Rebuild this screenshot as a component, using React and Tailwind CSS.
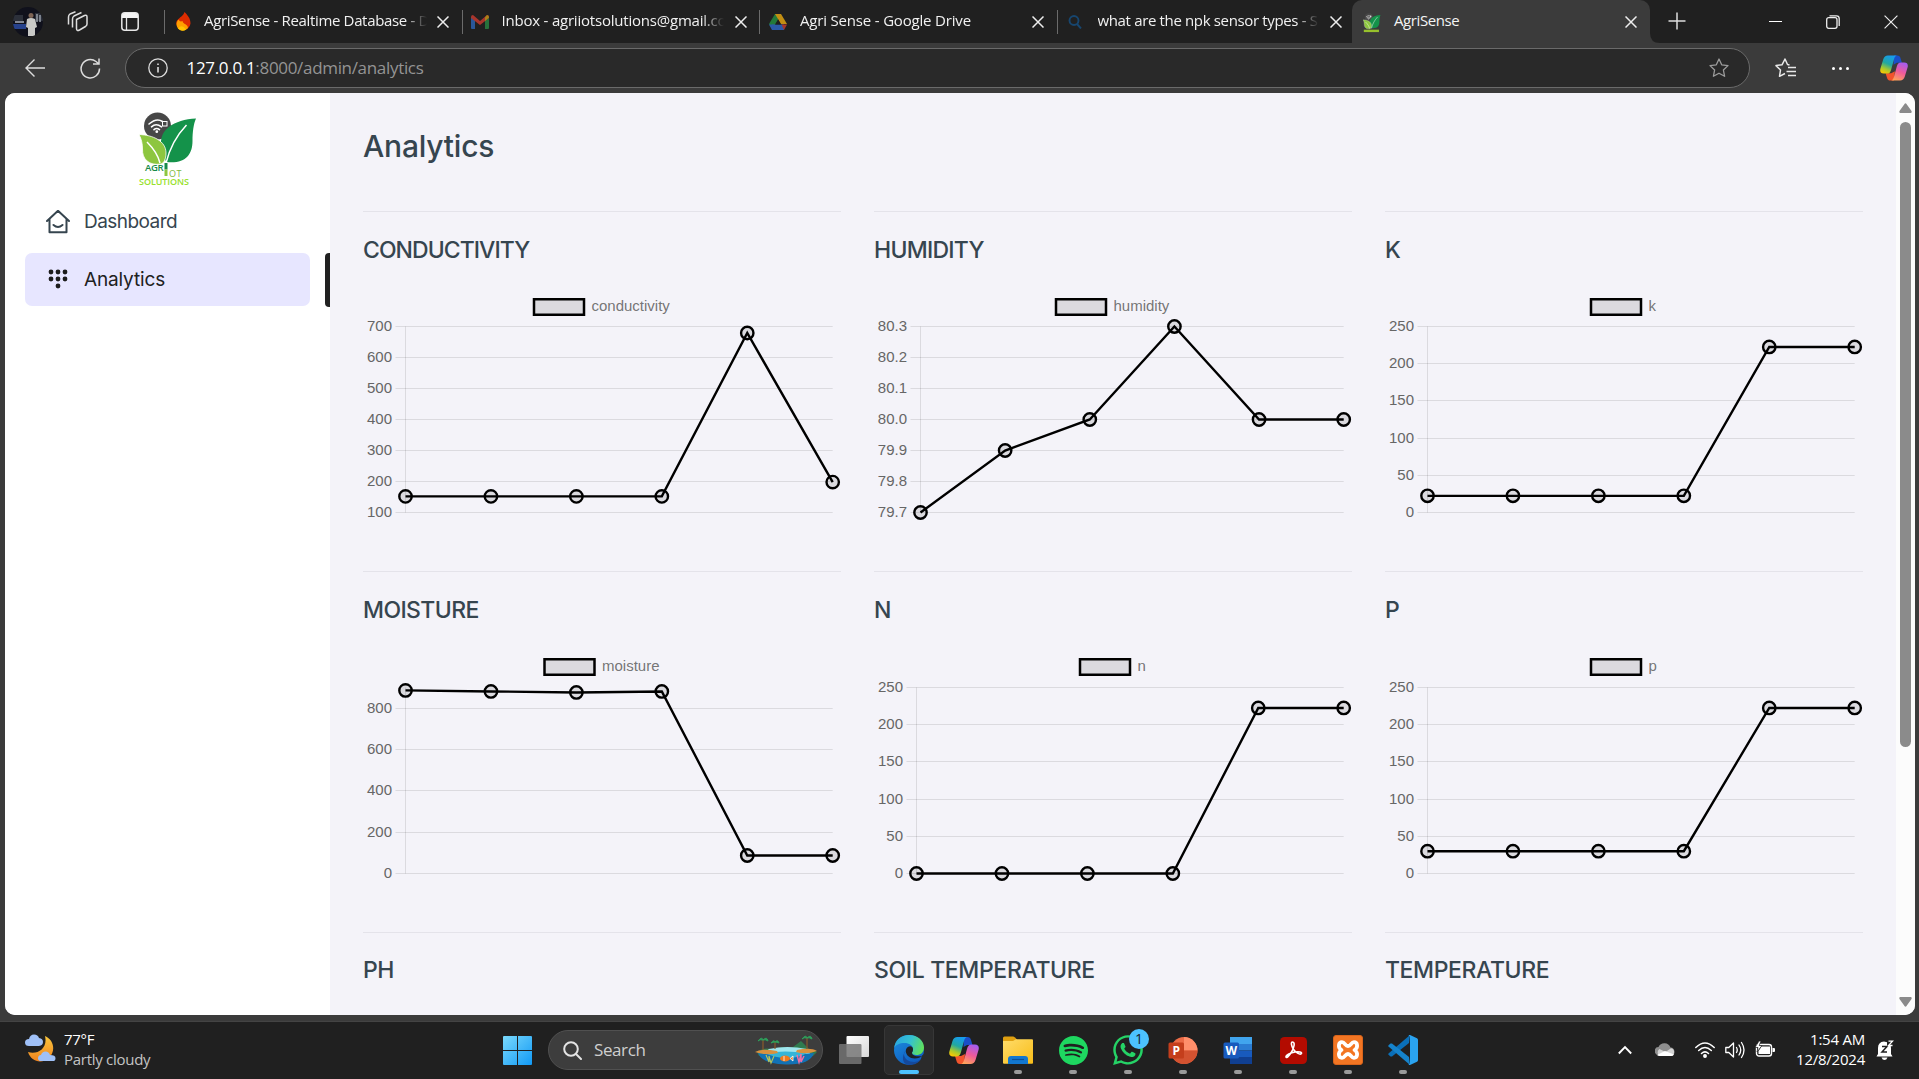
import { SiSpotify } from "react-icons/si";
import { FaWhatsapp } from "react-icons/fa";

const CHARTS = [
  { title: "CONDUCTIVITY", track: "tracking-[-0.95px]", lift: true, label: "conductivity", legendX: 171, left: 42.5, min: 100, max: 700, ticks: [700, 600, 500, 400, 300, 200, 100], data: [152, 152, 152, 152, 679, 198] },
  { title: "HUMIDITY", track: "tracking-[-0.75px]", lift: true, label: "humidity", legendX: 182, left: 46.5, min: 79.7, max: 80.3, digits: 1, ticks: [80.3, 80.2, 80.1, 80.0, 79.9, 79.8, 79.7], data: [79.7, 79.9, 80, 80.3, 80, 80] },
  { title: "K", track: "tracking-normal", lift: true, label: "k", legendX: 206, left: 42.5, min: 0, max: 250, ticks: [250, 200, 150, 100, 50, 0], data: [22.4, 22.4, 22.4, 22.4, 222.5, 222.5] },
  { title: "MOISTURE", track: "tracking-[-0.6px]", label: "moisture", legendX: 181.5, left: 42.5, min: 0, max: 900, ticks: [800, 600, 400, 200, 0], data: [886, 881, 876, 881, 87, 87] },
  { title: "N", track: "tracking-normal", label: "n", legendX: 206, left: 42.5, min: 0, max: 250, ticks: [250, 200, 150, 100, 50, 0], data: [0, 0, 0, 0, 222.5, 222.5] },
  { title: "P", track: "tracking-normal", label: "p", legendX: 206, left: 42.5, min: 0, max: 250, ticks: [250, 200, 150, 100, 50, 0], data: [30, 30, 30, 30, 222.5, 222.5] },
  { title: "PH", track: "tracking-[-0.5px]" },
  { title: "SOIL TEMPERATURE", track: "tracking-[-0.35px]" },
  { title: "TEMPERATURE", track: "tracking-[-0.4px]" },
];

function LineChart({ chart }) {
  const { left, min, max, ticks, data, label, legendX, lift, digits = 0 } = chart;
  const top = lift ? 34.5 : 35.5;
  const bottom = lift ? 220.5 : 221.5;
  const right = 469.7;
  const yOf = (v) => bottom - ((v - min) / (max - min)) * (bottom - top);
  const xOf = (i) => left + (i * (right - left)) / (data.length - 1);
  const points = data.map((v, i) => [xOf(i), yOf(v)]);
  return (
    <svg className="block h-[240px] w-[478px] overflow-visible font-['Liberation_Sans',Arial,sans-serif] text-[15px]" viewBox="0 0 478 240">
      <rect x={legendX} y="7.25" width="50" height="15.5" fill="rgba(0,0,0,0.1)" stroke="#000" strokeWidth="2.5" />
      <text x={legendX + 57.5} y="19" fill="#666" fillOpacity="0.9">{label}</text>
      {ticks.map((t) => {
        const y = Math.round(yOf(t) - 0.5) + 0.5;
        return (
          <g key={t}>
            <line x1={left - 10} x2={right} y1={y} y2={y} stroke="rgba(0,0,0,0.1)" />
            <text x={left - 13.5} y={y + 4.5} textAnchor="end" fill="#666">{t.toFixed(digits)}</text>
          </g>
        );
      })}
      <line x1={left} x2={left} y1={top} y2={bottom} stroke="rgba(0,0,0,0.1)" />
      <polyline points={points.map((p) => p.join(",")).join(" ")} fill="none" stroke="#000" strokeWidth="2.4" />
      {points.map(([x, y]) => (
        <circle key={x} cx={x} cy={y} r="6.2" fill="rgba(0,0,0,0.1)" stroke="#000" strokeWidth="2.4" />
      ))}
    </svg>
  );
}

function ChartCard({ chart }) {
  return (
    <section className="h-[360.4px] border-t border-[#e4e3ea]">
      <h2 className={`mt-[21.5px] h-8 text-[23px] leading-8 font-[450] whitespace-nowrap text-[#36454f] ${chart.track}`}>{chart.title}</h2>
      <div className="mt-[26px]">{chart.data && <LineChart chart={chart} />}</div>
    </section>
  );
}

function Leaves({ className, children, viewBox = "0 0 58 74" }) {
  return (
    <svg className={className} viewBox={viewBox}>
      <circle cx="18.5" cy="14" r="13.5" fill="#474747" />
      <g fill="none" stroke="#fff" strokeWidth="1.6" strokeLinecap="round">
        <path d="M10 12q7.500-6.500 13.500-2.500M12.500 14.800q4.500-4 10 0M15 17.600q2.500-2.200 5.500 0" />
        <rect x="23.500" y="9.500" width="4.500" height="4.500" strokeWidth="1" />
      </g>
      <circle cx="17.800" cy="19.700" r="1.400" fill="#fff" />
      <path d="M57 6.500C35 7.500 19 18 22.500 35C24 43 25.500 47 27.500 50C46 52 53.500 43 53.500 29C53.500 20 54.500 12 57 6.500Z" fill="#14924a" />
      <path d="M0 22.500C14 23 27 29 27 41C27 47 25 51 22 52C10 54 3 47 3.500 37C3.500 32 2.500 27 0 22.500Z" fill="#8dc63f" stroke="#fff" strokeWidth=".8" />
      <path d="M47.500 13C38 23 31 35 27 51M8 30C15 37 19 43 21 51" fill="none" stroke="#fff" strokeWidth="1.500" />
      {children}
    </svg>
  );
}

function Logo() {
  return (
    <Leaves className="h-[74px] w-[58px] overflow-visible font-['Open_Sans',sans-serif] font-bold">
      <text x="6" y="58.500" fontSize="9.500" textLength="18.500" fontWeight="600" fill="#168a49">AGR</text>
      <rect x="25.500" y="51" width="3" height="6.500" fill="#168a49" />
      <rect x="25.500" y="57.500" width="3" height="6.500" fill="#8dc63f" />
      <text x="30" y="64.500" fontSize="9" textLength="12.500" fontWeight="400" fill="#7fba3c">OT</text>
      <text x="0" y="73" fontSize="9" textLength="50" fill="#97e12c" fontWeight="600">SOLUTIONS</text>
    </Leaves>
  );
}

const X = ({ className = "w-3 h-3", w = 1.3 }) => (
  <svg className={className} viewBox="0 0 12 12" fill="none" stroke="#eee" strokeWidth={w}><path d="M.5.5l11 11M11.500.5l-11 11" /></svg>
);

const Flame = () => (
  <svg className="h-[19px] w-[15px]" viewBox="0 0 15 19"><path d="M8.500 0c5 5 6 8 6 11.500a7.200 7.200 0 0 1-14.200.5C0 8 2.500 7.500 4 5.500C6 4 7.500 3 8.500 0Z" fill="#dd2c00" /><path d="M2.500 7.500C-.5 11 .5 14 2 16.500C5 19.500 10 19 12 16C12 12 7 12.500 6.500 9C5 10 3.500 9.500 2.500 7.500Z" fill="#ffa000" /><path d="M2 16.500q4-5 8 1.200q-4 2.500-8-1.200" fill="#ffc400" /></svg>
);
const Gmail = () => (
  <svg className="h-[14px] w-[18px]" viewBox="0 0 18 14"><path d="M0 2v11q0 1 1 1h3V5z" fill="#2a5799" /><path d="M18 2v11q0 1-1 1h-3V5z" fill="#27713c" /><path d="M0 2q0-2 2-2l7 6 7-6q2 0 2 2v1l-9 7-9-7z" fill="#a8352c" /><path d="M14 2.500L16 0q2 0 2 2.500L14 6z" fill="#a98316" /></svg>
);
const Drive = () => (
  <svg className="h-4 w-[18px]" viewBox="0 0 18 16"><path d="M6 0h3v6L3.500 15.500 0 10z" fill="#237a3b" /><path d="M6 0h6l6 10h-6z" fill="#c28e13" /><path d="M3 10.500h12L15 16H3z" fill="#2b5aa8" /><path d="M12.500 10.500H18L15 16z" fill="#a8352c" /><path d="M9 5.500l3 5H6z" fill="#202020" /><path d="M0 10.500h5L3 16z" fill="#2b5aa8" /></svg>
);
const SearchBlue = () => (
  <svg className="h-[14px] w-[14px]" viewBox="0 0 14 14" fill="none" stroke="#17466f" strokeWidth="1.900"><circle cx="6" cy="5.500" r="4.500" /><path d="M9 9l4 4.500" /></svg>
);

const TABS = [
  { icon: <Flame />, text: "AgriSense - Realtime Database - D", track: "tracking-[-0.34px]", pad: "pl-[11px] gap-[13px]" },
  { icon: <Gmail />, text: "Inbox - agriiotsolutions@gmail.co", track: "tracking-[-0.21px]", pad: "pl-[8px] gap-[13px]" },
  { icon: <Drive />, text: "Agri Sense - Google Drive", track: "tracking-[-0.18px]", pad: "pl-[9px] gap-[13px]" },
  { icon: <SearchBlue />, text: "what are the npk sensor types - S", track: "tracking-[-0.35px]", pad: "pl-[10px] gap-4" },
];

function Star({ className }) {
  return <svg className={className} viewBox="0 0 20 20" fill="none" stroke="currentColor" strokeWidth="1.300" strokeLinejoin="round"><path d="M10 1l2.700 5.800 6.300.8-4.600 4.400 1.200 6.300L10 15.200l-5.600 3.100 1.200-6.300L1 7.600l6.300-.8z" /></svg>;
}

function Copilot({ className, id }) {
  return (
    <svg className={className} viewBox="0 0 30 27">
      <defs>
        <linearGradient id={`${id}a`} x1=".6" y1="0" x2=".2" y2="1"><stop offset="0" stopColor="#169bf0" /><stop offset=".45" stopColor="#22a8a0" /><stop offset=".75" stopColor="#a9ca2c" /><stop offset="1" stopColor="#ffc800" /></linearGradient>
        <linearGradient id={`${id}b`} x1=".7" y1="0" x2=".3" y2="1"><stop offset="0" stopColor="#a45cf0" /><stop offset=".5" stopColor="#ef5a9a" /><stop offset="1" stopColor="#ffa35a" /></linearGradient>
      </defs>
      <path d="M15 0h3.500c2 0 3 1 3.500 3l1.500 5H18l-3.500 2z" fill="#1a4fc8" />
      <path d="M15 27h-4c-2 0-3-1-3.500-3L6 19h6l4-2z" fill="#f2542c" />
      <path d="M8.500 0h10c-2 0-3 2-3.500 4l-3 11c-.8 3-2 4.500-4.500 4.500H4c-3 0-4.500-2-3.500-5.500L3.500 4C4.300 1.500 6 0 8.500 0Z" fill={`url(#${id}a)`} />
      <path d="M21.500 27h-10c2 0 3-2 3.500-4l3-11c.8-3 2-4.500 4.500-4.500H26c3 0 4.500 2 3.500 5.500L26.500 23c-.8 2.500-2.500 4-5 4Z" fill={`url(#${id}b)`} />
    </svg>
  );
}

function TabStrip() {
  return (
    <div className="flex h-[43px] bg-[#202020]">
      <div className="flex w-[164px] shrink-0 items-center pl-[13px]">
        <svg className="h-[30px] w-[30px]" viewBox="0 0 30 30">
          <defs><clipPath id="av"><circle cx="15" cy="15" r="15" /></clipPath></defs>
          <g clipPath="url(#av)">
            <rect width="30" height="30" fill="#10111c" /><path d="M0 8h10v6H0zM22 6h8v8h-8z" fill="#2c303a" /><path d="M0 17h13v5H0z" fill="#26418c" /><path d="M2 15h9M24 7v8M27 8v7" stroke="#a9afba" strokeWidth="1.300" />
            <circle cx="18" cy="8.500" r="2.500" fill="#7d6455" /><path d="M14 12q4-2 8 0l2 8-2 1v8h-7v-8l-2-1z" fill="#c9c9c7" />
          </g>
        </svg>
        <svg className="ml-6 h-[22px] w-[21px]" viewBox="0 0 21 22" fill="none" stroke="#ddd" strokeWidth="1.500" strokeLinejoin="round"><path d="M9.500 8.500l8-4q2.500-.8 2.500 1.500v7q0 1.500-1.500 2.500l-6 3.500q-3 1.500-3-1.500zM5.500 16.500V8q0-2 1.500-3l7.500-3.500M1.500 13.500V6q0-2 1.500-3L8.500.8" /></svg>
        <svg className="ml-[33px] h-[19px] w-[18px]" viewBox="0 0 18 19"><rect x=".8" y=".8" width="16.400" height="17.400" rx="3" fill="none" stroke="#e6e6e6" strokeWidth="1.500" /><path d="M1 6V4q0-3 3-3h10q3 0 3 3v2z" fill="#f4f4f4" /><path d="M5.500 6v12" stroke="#e6e6e6" strokeWidth="1.300" /></svg>
      </div>
      {TABS.map((t) => (
        <div key={t.text} className="flex w-[297.5px] shrink-0 items-center">
          <span className="h-6 w-px bg-[#6b6b6b]" />
          <div className={`flex min-w-0 flex-1 items-center ${t.pad}`}>
            <span className="shrink-0">{t.icon}</span>
            <span className={`mb-0.5 flex-1 overflow-hidden text-[15px] whitespace-nowrap text-[#f1f1f1] [mask-image:linear-gradient(to_right,black_90%,transparent_100%)] ${t.track}`}>{t.text}</span>
          </div>
          <X className="mr-[12.5px] ml-[10.5px] h-3 w-3 shrink-0" w={1.5} />
        </div>
      ))}
      <div className="-ml-[2px] flex w-[298px] shrink-0 items-center rounded-t-[10px] bg-[#3b3b3b] pr-[13.5px] pl-[11px]">
        <Leaves className="mt-0.5 h-[20px] w-[18px]" viewBox="0 0 58 66"><path d="M2 59h50" stroke="#97c12c" strokeWidth="8" /></Leaves>
        <span className="mb-0.5 ml-[13px] flex-1 text-[15px] tracking-[-0.4px] text-[#f4f4f4]">AgriSense</span>
        <X className="h-3 w-3" w={1.5} />
      </div>
      <svg className="mt-[33px] h-2.5 w-2.5" viewBox="0 0 10 10"><path d="M0 0q0 10 10 10H0z" fill="#3b3b3b" /></svg>
      <svg className="mt-[12px] ml-2 h-[18px] w-[18px]" viewBox="0 0 18 18" stroke="#ddd" strokeWidth="1.500"><path d="M9 .5v17M.5 9h17" /></svg>
      <div className="flex flex-1 items-center justify-end pr-[21px]">
        <span className="mr-[44px] h-[1.5px] w-[13px] bg-white" />
        <svg className="mr-[44px] h-[14px] w-[14px]" viewBox="0 0 14 14" fill="none" stroke="#eee" strokeWidth="1.300"><rect x=".7" y="2.700" width="10.300" height="10.600" rx="2" /><path d="M3.500.8h7q2.700 0 2.700 2.700v7.500" /></svg>
        <X className="h-[14px] w-[14px]" w={1} />
      </div>
    </div>
  );
}

function Toolbar() {
  return (
    <div className="flex h-[50px] items-center bg-[#3b3b3b] text-[#e8e8e8]">
      <svg className="ml-[24.5px] h-[18px] w-[20px]" viewBox="0 0 20 18" fill="none" stroke="#ddd" strokeWidth="1.400"><path d="M9.500.5L1 9l8.500 8.500M1 9h19" /></svg>
      <svg className="ml-[35.5px] h-[21px] w-[21px]" viewBox="0 0 21 21" fill="none" stroke="#ddd" strokeWidth="1.500"><path d="M19.500 10.500A9.200 9.200 0 1 1 16 3.500L19 6M19 .5V6h-6" /></svg>
      <div className="ml-[24px] flex h-10 w-[1624.5px] items-center rounded-full border border-[#6a6a6a] bg-[#292929]">
        <svg className="ml-[22px] h-5 w-5" viewBox="0 0 20 20" fill="none" stroke="#ddd" strokeWidth="1.300"><circle cx="10" cy="10" r="9.200" /><path d="M10 9v5.500M10 5.500V7" strokeWidth="1.600" /></svg>
        <span className="ml-[18.5px] flex-1 text-[17px] tracking-[-0.32px] whitespace-nowrap text-[#949494]"><span className="text-white">127.0.0.1</span>:8000/admin/analytics</span>
        <Star className="mr-5 h-5 w-5 text-[#9c9c9c]" />
      </div>
      <svg className="ml-[25px] h-5 w-[21px]" viewBox="0 0 21 20" fill="none" stroke="#e8e8e8" strokeWidth="1.500" strokeLinejoin="round"><path d="M14.500 7L12.500 6.500 10 1 7 6.800 1 7.600l4.500 4.400L4.500 18.300 10 15.500M13 9.500h8M11.500 13.500H21M13 17.500h8" /></svg>
      <span className="ml-9 flex gap-1">{[0, 1, 2].map((i) => <i key={i} className="h-[3px] w-[3px] rounded-full bg-white" />)}</span>
      <Copilot className="ml-[31px] h-[26px] w-[28px]" id="tb" />
    </div>
  );
}

function Sidebar() {
  return (
    <aside className="flex w-[325px] shrink-0 flex-col bg-white">
      <div className="mt-[19px] ml-[134px] h-[74px]"><Logo /></div>
      <nav className="mt-[9px] text-[19px]">
        <a className="ml-5 flex h-[53px] items-center pl-[21px] text-[#36454f]">
          <svg className="h-6 w-6" viewBox="0 0 24 24" fill="none" stroke="#36454f" strokeWidth="2" strokeLinejoin="round" strokeLinecap="round"><path d="M1 11L12 .8 23 11M3.500 9V22.200H20.500V9M7.500 15q4.500 4 9 0" /></svg>
          <span className="mt-0.5 ml-[14px] tracking-[-0.55px]">Dashboard</span>
        </a>
        <div className="mt-[5px] flex justify-between pl-5">
          <a className="flex h-[53px] w-[285px] items-center rounded-[7px] bg-[#e7e6ff] pl-[23px] text-[#212121]">
            <svg className="-mt-0.5 h-5 w-5" viewBox="0 0 20 20" fill="#1c1c1c">{[[3, 3], [10, 3], [17, 3], [3, 10], [10, 10], [17, 10], [10, 17]].map(([x, y]) => <circle key={`${x}-${y}`} cx={x} cy={y} r="2.400" />)}</svg>
            <span className="mt-0.5 ml-4 tracking-[-0.15px]">Analytics</span>
          </a>
          <span className="h-[54px] w-[5px] rounded-l-[4px] bg-[#212121]" />
        </div>
      </nav>
    </aside>
  );
}

function Scrollbar() {
  return (
    <div className="flex w-[19px] shrink-0 flex-col items-center bg-[#fcfcfc] pt-[10px] pb-2">
      <svg className="h-[10px] w-[13px]" viewBox="0 0 13 10"><path d="M5.500 1q1-1.500 2 0L12.500 8q.7 2-1 2H1.500q-1.700 0-1-2z" fill="#8b8b8b" /></svg>
      <span className="mt-[9px] h-[625px] w-[11px] rounded-full bg-[#8b8b8b]" />
      <svg className="mt-auto h-[10px] w-[13px]" viewBox="0 0 13 10"><path d="M5.500 9q1 1.500 2 0L12.500 2q.7-2-1-2H1.500Q-.2 0 .5 2z" fill="#8b8b8b" /></svg>
    </div>
  );
}

const Office = ({ letter, word }) => (
  <svg className="h-[29px] w-[30px]" viewBox="0 0 30 29">
    {word ? (
      <><path d="M7 1h22v7H7z" fill="#41a5ee" /><path d="M7 8h22v6.500H7z" fill="#2b7cd3" /><path d="M7 14.500h22V21H7z" fill="#185abd" /><path d="M7 21h22v7H7z" fill="#103f91" /></>
    ) : (
      <><circle cx="16" cy="14.500" r="13.500" fill="#ed6c47" /><path d="M16 1a13.500 13.500 0 0 1 13.500 13.500H16z" fill="#ff8f6b" /><path d="M2.500 14.500h27a13.500 13.500 0 0 1-27 0" fill="#d35230" /></>
    )}
    <rect x=".5" y="6.500" width="15.500" height="16" rx="1.500" fill={word ? "#185abd" : "#c43e1c"} />
    <text x="8.200" y="18.800" textAnchor="middle" fill="#fff" fontSize="12" fontWeight="700">{letter}</text>
  </svg>
);

const Edge = () => (
  <svg className="h-[30px] w-[30px]" viewBox="0 0 30 30">
    <defs>
      <linearGradient id="eg" x1="0" y1=".3" x2="1" y2=".6"><stop offset="0" stopColor="#2aa6e0" /><stop offset=".5" stopColor="#35c1d0" /><stop offset="1" stopColor="#62e257" /></linearGradient>
      <linearGradient id="eb" x1="0" y1="0" x2=".6" y2="1"><stop offset="0" stopColor="#1c8fe0" /><stop offset="1" stopColor="#0f5cbf" /></linearGradient>
    </defs>
    <circle cx="15" cy="15" r="15" fill="url(#eb)" />
    <path d="M10 19c0 5 5 8 10 8 3 0 5-1 7.500-3.500C25 28 20 30 15.500 30 7 29.500 8 20 12 15z" fill="#15499b" />
    <path d="M.2 13C1 5 7 0 15 0c9 0 15 6 15 12.500 0 5-3.500 7.500-7.500 7.500-3 0-5-1-4.500-2.500.8-1 1-2 1-3.500C19 10.500 15 8 10.500 8 5.500 8 1.500 10 .2 13Z" fill="url(#eg)" />
    <path d="M18 17.500c.8-1 1-2 1-3.500 0-1.500-1.200-2.800-3-2.800-2.500 0-4.200 2.200-4.200 4.800 0 4 4 7.500 9 7.500 3 0 6-1.500 7.500-2.500-2 .5-10.500 1-10.300-3.500Z" fill="#202124" />
    <path d="M28 20.500q1.500-.7 2-1.500v4l-3 1z" fill="#2b2b2b" />
  </svg>
);

const Folder = () => (
  <svg className="h-7 w-[30px]" viewBox="0 0 30 28"><defs><linearGradient id="fo" x1="0" y1="0" x2="1" y2="1"><stop offset="0" stopColor="#ffdc6a" /><stop offset="1" stopColor="#f8bd18" /></linearGradient></defs><path d="M0 2q0-1.500 1.500-1.500H10q1 0 2 1L14 3.500V10H0z" fill="#e0a010" /><path d="M0 5h10l3-1.800h16q1 0 1 1V27q0 .8-1 .8H1q-1 0-1-1z" fill="url(#fo)" /><path d="M5 28v-5q0-3 3-3h14q3 0 3 3v5z" fill="#1277cf" /><path d="M9 23.500h12" stroke="#0b4f97" strokeWidth="1.200" /></svg>
);
const WhatsApp = () => (
  <span className="relative">
    <FaWhatsapp className="h-[34px] w-[34px] text-[#25d366]" />
    <span className="absolute -top-[4.5px] -right-[4px] flex h-5 w-5 items-center justify-center rounded-full bg-[#4cc2ff] text-[14px] text-[#15202b]">1</span>
  </span>
);
const Acrobat = () => (
  <svg className="h-[27px] w-[27px]" viewBox="0 0 27 27"><rect width="27" height="27" rx="4.500" fill="#b30b00" /><path d="M12.500 5c3 0 1.500 6-1 10s-5 6.500-5.500 5c-.5-2 5-4.500 9-5s7 0 6.500 1.500c-.8 2-6-1-8-4s-3-7.500-1-7.500Z" fill="none" stroke="#fff" strokeWidth="1.600" /></svg>
);
const Xampp = () => (
  <span className="flex h-[30px] w-[30px] items-center justify-center rounded-[3px] border border-[#d9641b] bg-[#f37623]">
    <svg className="h-[22px] w-[24px]" viewBox="0 0 24 22" fill="none" stroke="#fff" strokeWidth="3.800" strokeLinecap="round" strokeLinejoin="round"><path d="M5.500 11C1.500 8.500 2.500 3.200 6 3.200c3 0 3 3.800 6 3.800s3-3.800 6-3.800c3.500 0 4.500 5.300.5 7.800 4 2.500 3 7.800-.5 7.800-3 0-3-3.800-6-3.800s-3 3.800-6 3.800c-3.500 0-4.500-5.300-.5-7.800Z" /></svg>
  </span>
);
const Code = () => (
  <svg className="h-[30px] w-[30px]" viewBox="0 0 30 30"><path d="M22 0l-1 8L4 21.500 2.500 21.500.5 19.800Q0 19 .5 18.400z" fill="#0a6fb8" /><path d="M22 30l-1-8L4 8.500 2.500 8.500.5 10.200Q0 11 .5 11.600z" fill="#1583cc" /><path d="M22 0l7 3.200q1 .5 1 1.800v20q0 1.300-1 1.800L22 30q-1 .2-1.500-.5l1.500-1V1.500L20.500.5Q21-.2 22 0Z" fill="#2aa3f0" /></svg>
);

const APPS = [<Folder />, <SiSpotify className="h-[29px] w-[29px] text-[#1ed760]" />, <WhatsApp />, <Office letter="P" />, <Office letter="W" word />, <Acrobat />, <Xampp />, <Code />];

function Lagoon() {
  return (
    <svg className="h-[30px] w-[62px]" viewBox="0 0 62 30">
      <path d="M2 17Q8 12 18 14l10-2h10l8-6 8 8 8 3-4 4H4z" fill="#2f7a4e" />
      <path d="M14 14q18-4 38 0l4 6H6z" fill="#9fe6ee" />
      <path d="M3 18q4 11 28 11.500T59 18q-28 3-56 0Z" fill="#1272b5" /><path d="M10 18q20-3 42 0-8 5-20 5T10 18" fill="#35b5d8" />
      <path d="M0 17q6-4 22-1l1 2q-12 3-23-1M62 16q-6-4-20-1l-1 2q10 3 21-1" fill="#d9913f" />
      <path d="M8 15V5M20 14V7M52 14V2" stroke="#8a5a2b" strokeWidth="1.200" />
      <path d="M3 6q4-5 5-1 4-4 5 1-3-2-5-1-3-1-5 1M16 8q3-4 4-1 3-3 4 1-2-1-4-1-2 0-4 1M47 4q4-5 5-1 4-4 5 1-3-2-5-1-3-1-5 1" fill="#2e9e5b" stroke="#2e9e5b" />
      <path d="M11 20l3 7 0-6 2 7 3-7" fill="none" stroke="#b9c65a" strokeWidth="1.100" /><path d="M42 20l2 7 2-8 0 8 3-6" fill="none" stroke="#ef6fa5" strokeWidth="1.500" />
      <ellipse cx="30" cy="23.500" rx="5" ry="3" fill="#f07a1c" /><path d="M29 21v5M35 23.500l3-2.500v5z" stroke="#fff" strokeWidth=".8" fill="#f07a1c" />
    </svg>
  );
}

function Taskbar() {
  return (
    <footer className="flex h-[58px] border-t border-[#444] bg-[#202020] pb-px text-white">
      <div className="flex w-[503px] items-center pl-[25px]">
        <svg className="-mt-1 h-7 w-[31px]" viewBox="0 0 31 28"><defs><linearGradient id="mo" x1="0" y1="0" x2="0" y2="1"><stop offset="0" stopColor="#f9c63e" /><stop offset="1" stopColor="#f0831e" /></linearGradient></defs><path d="M20 2C29 6 31 17 24 24 17 30 6 28 3 18c10 3 20-4 17-16Z" fill="url(#mo)" /><path d="M4 12q-4 0-4-3.500T4 5q1-4.500 5-4.500T14 4q4 .5 4 4t-4 4zM16 27q-3 0-3-2.800T16 21q1-3.500 4.500-3.500T25 21q5.500 0 5.500 3.200T27 27z" fill="#9fc0f7" /></svg>
        <div className="-mt-[3px] ml-2 text-[15px] leading-5 tracking-[-0.28px]"><div>77°F</div><div className="text-[#c4c4c4]">Partly cloudy</div></div>
      </div>
      <div className="flex items-center">
        <svg className="h-[29px] w-[29px]" viewBox="0 0 29 29"><defs><linearGradient id="wn" gradientUnits="userSpaceOnUse" x1="0" y1="0" x2="29" y2="29"><stop offset="0" stopColor="#7ad9fc" /><stop offset="1" stopColor="#1199f5" /></linearGradient></defs><path d="M0 1q0-1 1-1h13v14H0zM15 0h13q1 0 1 1v13H15zM0 15h14v14H1q-1 0-1-1zM15 15h14v13q0 1-1 1H15z" fill="url(#wn)" /></svg>
        <div className="ml-4 flex h-10 w-[275px] items-center rounded-full border border-[#505050] bg-[#3d3d3d] pl-3.5">
          <svg className="h-[19px] w-[19px]" viewBox="0 0 19 19" fill="none" stroke="#e4e4e4" strokeWidth="2" strokeLinecap="round"><circle cx="8" cy="8" r="6.800" /><path d="M13 13l5 5" /></svg>
          <span className="ml-[12px] flex-1 text-[17px] tracking-[-0.4px] text-[#cfcfcf]">Search</span>
          <span className="mr-[5px]"><Lagoon /></span>
        </div>
        <svg className="ml-4 h-7 w-[30px]" viewBox="0 0 30 28"><defs><linearGradient id="tv" x1="0" y1="0" x2="1" y2="1"><stop offset="0" stopColor="#fff" /><stop offset="1" stopColor="#d8d8d8" /></linearGradient></defs><rect x="7.500" y="0" width="22.500" height="21" rx="1" fill="url(#tv)" /><rect x="0" y="8" width="22.500" height="20" rx="1" fill="#777" fillOpacity=".85" /></svg>
        <div className="ml-[15px] flex h-[50px] w-[50px] flex-col items-center rounded-[5px] border border-[#373737] bg-[#2b2b2b] pt-[9px]"><Edge /><span className="mt-[5px] h-1 w-5 rounded-full bg-[#4cc2ff]" /></div>
        <div className="ml-[2.5px] flex w-[55px] justify-center"><Copilot className="h-[27px] w-[30px]" id="tk" /></div>
        {APPS.map((app, i) => (
          <div key={i} className="-ml-px mr-px flex h-[50px] w-[55px] flex-col items-center">
            <div className="flex h-[45px] items-center pt-[5px]">{app}</div>
            <span className="h-1 w-2 shrink-0 rounded-full bg-[#9a9a9a]" />
          </div>
        ))}
      </div>
      <div className="flex flex-1 items-center justify-end pr-[25px]">
        <svg className="h-[10px] w-[14px]" viewBox="0 0 14 10" fill="none" stroke="#fff" strokeWidth="1.900"><path d="M.8 8.500L7 2.200l6.200 6.300" /></svg>
        <svg className="-mt-0.5 ml-[23px] h-[13px] w-5" viewBox="0 0 20 13"><path d="M4 12a4 4 0 0 1-.5-8A6.500 6.500 0 0 1 15.500 4.500 4.300 4.300 0 0 1 16 13z" fill="#8f8f8f" /><path d="M4.500 13a4.200 4.200 0 0 1 0-7l6 3L16 5.200a4 4 0 0 1 0 7.800z" fill="#d4d4d4" /><path d="M2 12l8-4 9 3.500q-1 1.500-3 1.500H4.500Q3 13 2 12Z" fill="#fff" /></svg>
        <svg className="ml-5 h-4 w-5" viewBox="0 0 20 16" fill="none" stroke="#fff" strokeWidth="1.500" strokeLinecap="round"><path d="M.8 5.500q9.200-9 18.400 0M3.700 8.500q6.300-6 12.600 0M6.500 11.500q3.500-3.300 7 0" /><circle cx="10" cy="14" r="1.200" fill="#fff" /></svg>
        <svg className="ml-[10px] h-[18px] w-5" viewBox="0 0 20 18" fill="none" stroke="#fff" strokeWidth="1.300" strokeLinecap="round" strokeLinejoin="round"><path d="M.8 6.500h3L8.500 2v14l-4.700-4.500h-3zM11.500 6.500q1.500 2.500 0 5M14 4q3.500 5 0 10M16.500 1.500q5 7.500 0 15" /></svg>
        <svg className="-mt-0.5 ml-[10px] h-4 w-5" viewBox="0 0 20 16"><rect x="1.500" y="3.500" width="15" height="11.500" rx="2.500" fill="none" stroke="#fff" strokeWidth="1.400" /><path d="M6.500 5.500H15V13H3.500V10z" fill="#fff" /><path d="M17.500 7h1.500q1 0 1 1v2q0 1-1 1h-1.500z" fill="#fff" /><path d="M4 0L0 6.500h3L2 11l5-6.500H4.200L6 0z" fill="#fff" stroke="#202020" strokeWidth=".7" /></svg>
        <div className="-mt-[3px] ml-[21px] text-right text-[15px] leading-5 tracking-[-0.23px]"><div>1:54 AM</div><div>12/8/2024</div></div>
        <svg className="ml-[11px] h-5 w-[18px]" viewBox="0 0 18 20"><path d="M2 14V8q0-6 6-6.500 7 .5 7 7V14l1.500 2.500H.5zM5.500 17.500h6q-1 2.500-3 2.500t-3-2.500Z" fill="#fff" /><path d="M6 6.500h5L6 12h5" fill="none" stroke="#202020" strokeWidth="1.500" /><path d="M11 0h7v6h-7z" fill="#202020" /><path d="M12.500 1.200h4L12.500 5.500h4" fill="none" stroke="#fff" strokeWidth="1.300" /></svg>
      </div>
    </footer>
  );
}

export default function App() {
  return (
    <div className="flex h-[1079px] w-[1919px] flex-col overflow-hidden bg-[#3b3b3b] font-['Open_Sans','Noto_Sans',sans-serif]">
      <TabStrip />
      <Toolbar />
      <div className="mr-[4px] mb-[6px] ml-[5px] flex h-[922px] overflow-hidden rounded-[10px] bg-[#f4f3f9] font-['Inter',sans-serif]">
        <Sidebar />
        <main className="h-full min-w-0 flex-1 overflow-hidden pl-[33px]">
          <h1 className="mt-[30px] h-[46px] text-[30px] leading-[46px] font-[450] tracking-[-0.2px] text-[#36454f]">Analytics</h1>
          <div className="mt-[42px] grid grid-cols-[478px_478px_478px] gap-x-[33px]">
            {CHARTS.map((c) => <ChartCard key={c.title} chart={c} />)}
          </div>
        </main>
        <Scrollbar />
      </div>
      <Taskbar />
    </div>
  );
}
